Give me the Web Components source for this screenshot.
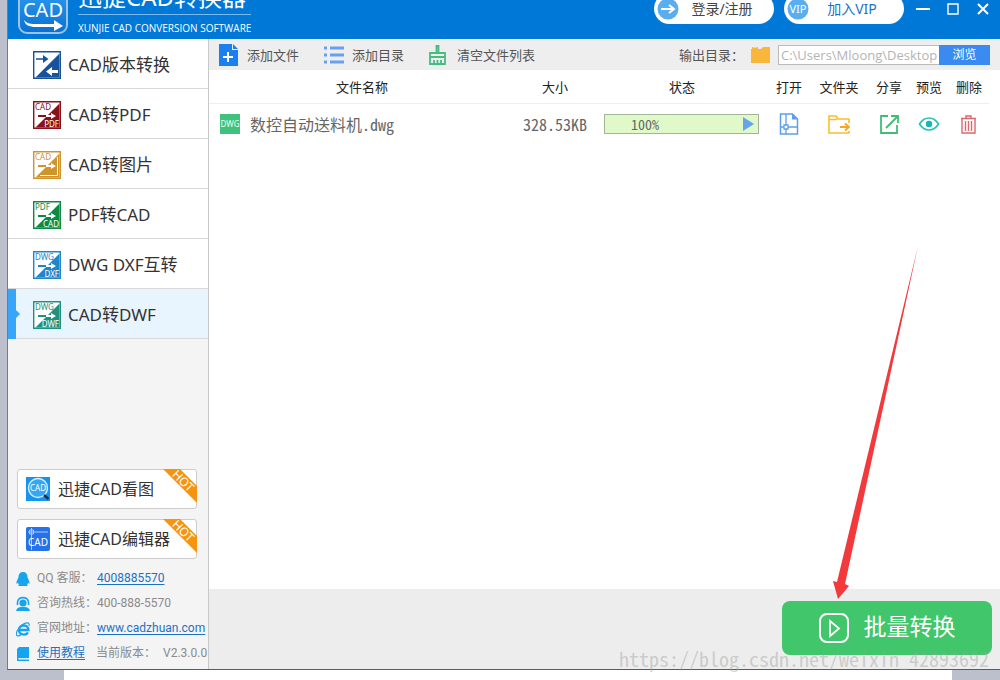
<!DOCTYPE html>
<html lang="zh-CN">
<head>
<meta charset="utf-8">
<title>迅捷CAD转换器</title>
<style>
html{height:100%}
body{margin:0;min-height:100%;display:flex;flex-direction:column;background:#bcc0cc;color:#333;font-family:"Noto Sans","Noto Sans CJK SC",sans-serif}
converter-app{flex:1}
.sheet{height:10px;margin:0 48px 0 64px;background:#fff}
</style>
</head>
<body>
<converter-app></converter-app>
<div class="sheet"></div>

<script>
const GLYPHS = {
  logo: ['0 0 50 50', `<defs><linearGradient id="g" x1="0" y1="0" x2="0" y2="1"><stop offset="0" stop-color="#2fa0f5"/><stop offset="1" stop-color="#0a70d0"/></linearGradient></defs><rect x="1" y="1" width="48" height="48" rx="8" fill="url(#g)" stroke="#9cc3e6" stroke-width="2"/><text x="25" y="33" font-size="20" text-anchor="middle" fill="#fff">CAD</text><path d="M6 36c3 4 7 4 13 4h17v-4l9 6-9 5v-4H18c-7 0-11-2-12-7z" fill="#fff"/>`],
  login: ['0 0 24 24', `<circle cx="12" cy="12" r="10.500" fill="#5aaef0"/><path d="M5 12h13M13 8l5 4-5 4" fill="none" stroke="#fff" stroke-width="2"/>`],
  vip: ['0 0 24 24', `<circle cx="12" cy="12" r="10.500" fill="#5aaef0"/><text x="12" y="16" font-size="11" text-anchor="middle" fill="#fff">VIP</text>`],
  min: ['0 0 14 14', `<path d="M0 7h14" stroke="#fff" stroke-width="2"/>`],
  max: ['0 0 14 14', `<path d="M2 2h10v10H2z" fill="none" stroke="#fff" stroke-width="1.400"/>`],
  close: ['0 0 14 14', `<path d="M2 2l10 10M12 2L2 12" stroke="#fff" stroke-width="2"/>`],
  addfile: ['0 0 20 22', `<path d="M0 0h13v6h6v16H0z" fill="#1b7ff0"/><path d="M14 0l5 5h-5z" fill="#1b7ff0"/><path d="M4 13h10M9 8v10" stroke="#fff" stroke-width="2"/>`],
  list: ['0 0 20 22', `<path d="M0 4h3M0 11h3M0 18h3M6 4h14M6 11h14M6 18h14" stroke="#66a0f0" stroke-width="3"/>`],
  broom: ['0 0 20 22', `<path d="M7.500 2h2v7h-2zM1 9h15v4H1zM1 13v7h15v-7M5 20v-4M8.500 20v-4M12 20v-4" fill="none" stroke="#45bd80" stroke-width="1.800"/>`],
  folder: ['0 0 20 18', `<path d="M0 3h1V1h6v2h3l2-2h7v16H0z" fill="#f8b73c"/><path d="M2 1.500h4" stroke="#fbd58a"/>`],
  dwg: ['0 0 20 20', `<path d="M0 0h20v20H0z" fill="#3fc280"/><text x="10" y="13" font-size="8" text-anchor="middle" fill="#e9fff3">DWG</text>`],
  open: ['0 0 22 24', `<path d="M2.500 2h12l5 5v15h-17z" fill="none" stroke="#5c9ff0" stroke-width="1.500"/><path d="M14 2v5.500h5.500z" fill="#5c9ff0"/><path d="M8 2v11M8 17v5M2 15h4M10 15h9M6 13h4v4H6z" fill="none" stroke="#5c9ff0" stroke-width="1.300"/>`],
  goto: ['0 0 22 24', `<path d="M21 11V7H10L8 4H1v17h20v-2M1 7.500h8" fill="none" stroke="#f9be2e" stroke-width="1.600"/><path d="M12 15h9M17 11.500l4 3.500-4 3.500" fill="none" stroke="#f6a51c" stroke-width="1.800"/>`],
  share: ['0 0 22 24', `<path d="M10 4H3v17h16v-8M8 16L19 5M13 4h7v7" fill="none" stroke="#3fbd75" stroke-width="1.800"/>`],
  eye: ['0 0 22 24', `<path d="M1.500 12c5-8 14-8 19 0-5 8-14 8-19 0z" fill="none" stroke="#28c3b8" stroke-width="1.700"/><circle cx="11" cy="12" r="3.200" fill="#19b6b4"/>`],
  trash: ['0 0 22 24', `<path d="M4 7v14h13V7M3 6.500h15M8 6V4h5v2M7.500 9v10M10.500 9v10M13.500 9v10" fill="none" stroke="#d86a70" stroke-width="1.400"/>`],
  play: ['0 0 30 30', `<rect x="1" y="1" width="28" height="28" rx="7" fill="none" stroke="#fff" stroke-width="2"/><path d="M11 8v15l9-7.500z" fill="none" stroke="#fff" stroke-width="1.800"/>`],
  viewer: ['0 0 24 24', `<path d="M0 0h24v24H0z" fill="#1795ee"/><circle cx="12" cy="11" r="9.500" fill="#36a7f3" stroke="#d5efff" stroke-width="1.400"/><text x="12" y="14" font-size="8" text-anchor="middle" fill="#fff">CAD</text><path d="M18 18l4.500 4" stroke="#17334d" stroke-width="2.500"/>`],
  editor: ['0 0 24 24', `<rect width="24" height="24" rx="2" fill="#2672e8"/><path d="M2 5h20M5.500 1v22M3.500 3h4v4h-4z" fill="none" stroke="#a9cdff"/><text x="12" y="19" font-size="10" text-anchor="middle" fill="#fff">CAD</text>`],
  qq: ['0 0 14 16', `<path d="M7 1c3 0 4.500 2 4.500 5 0 1.500 2.500 4 2 6.500-.5 1-1-.5-1.500-1 0 1-.5 1.500-1 2 1.500 1 .5 1.500-1 1.500H4c-1.500 0-2.500-.5-1-1.500-.5-.5-1-1-1-2-.5.500-1 2-1.500 1C0 10 2.500 7.500 2.500 6c0-3 1.500-5 4.500-5z" fill="#17a4ee"/>`],
  support: ['0 0 14 16', `<circle cx="7" cy="7" r="3.600" fill="#17a4ee"/><path d="M1.500 9V6.500C2 0 12 0 12.500 6.500V9" fill="none" stroke="#17a4ee" stroke-width="1.600"/><path d="M0 15c1-4 4-4 7-4s6 0 7 4z" fill="#17a4ee"/>`],
  web: ['0 0 14 16', `<path d="M12 11.500c-2 3-9 3-9-2.500 0-6 9.500-6 9.500 0H4" fill="none" stroke="#17a4ee" stroke-width="2.300"/><path d="M13 5c1-4-3-4-7-1-4 3-7 9-5 10.500 1 .7 3 0 4-1" fill="none" stroke="#17a4ee" stroke-width="1.200"/>`],
  book: ['0 0 14 16', `<path d="M3 1h10v11H2.500v1.500H13V15H1V3z" fill="#17a4ee"/><path d="M2.500 12.700H12" stroke="#bfe5fa"/>`]
};

/* Square two-tone badge used in the side menu: source format above, target format below. */
function badge(color, from, to, extra = '') {
  const arrows = from
    ? `<path d="M5 14h8v2H5z" fill="${color}"/><path d="M13 14h5v-2l5 3-5 3v-2h-5z" fill="#fff"/><text x="2" y="9" font-size="8" fill="${color}">${from}</text><text x="26" y="26" font-size="8" text-anchor="end" fill="#fff">${to}</text>`
    : `<path d="M3 7.200h7V4l5.500 4-5.500 4V8.800H3z" fill="${color}"/><path d="M25 19h-6v-3l-6 4.500 6 4.500v-3h6z" fill="#fff"/>`;
  return ['0 0 28 28', `<path d="M.7.700h26.600v26.600H.7z" fill="#fff" stroke="${color}" stroke-width="1.400"/><path d="M26.500 2.500v24h-24z" fill="${color}"/>${extra}${arrows}`];
}
GLYPHS.version = badge('#17529a');
GLYPHS.pdf = badge('#8c1017', 'CAD', 'PDF');
GLYPHS.image = badge('#d0942a', 'CAD', '', '<path d="M24.500 6v18.500H7" fill="none" stroke="#fff"/>');
GLYPHS.cad = badge('#0c8a42', 'PDF', 'CAD');
GLYPHS.dxf = badge('#2086cc', 'DWG', 'DXF');
GLYPHS.dwf = badge('#1f917e', 'DWG', 'DWF');

function define(name, html, setup) {
  const template = document.createElement('template');
  template.innerHTML = '<style>*{box-sizing:border-box}</style>' + html;
  customElements.define(name, class extends HTMLElement {
    connectedCallback() {
      if (this.shadowRoot) return;
      const root = this.attachShadow({ mode: 'open' });
      root.append(template.content.cloneNode(true));
      if (setup) setup(this, root);
    }
  });
}

define('ui-icon', `<style>:host{display:block;flex:none;font-family:"Noto Sans",sans-serif}svg{display:block;width:100%;height:100%}</style>`, (el, root) => {
  const [box, body] = GLYPHS[el.getAttribute('name')];
  const [, , w, h] = box.split(' ');
  el.style.width = w + 'px';
  el.style.height = h + 'px';
  const holder = document.createElement('template');
  holder.innerHTML = `<svg viewBox="${box}" aria-hidden="true">${body}</svg>`;
  root.append(holder.content.cloneNode(true));
});

define('pill-button', `<style>
:host{display:block}
button{display:flex;align-items:center;width:120px;height:31px;padding:0 10px 0 2px;border:0;border-radius:16px;background:#fff;color:inherit;font:14px/20px "Noto Sans","Noto Sans CJK SC",sans-serif}
span{flex:1;text-align:center}
</style><button type="button"><slot name="icon"></slot><span><slot></slot></span></button>`);

define('title-bar', `<style>
:host{display:flex;align-items:flex-end;height:39px;padding:0 10px;overflow:hidden;background:#0078d7;color:#fff}
.logo{margin-bottom:5px}
.brand{margin:0 auto 4px 10px}
h1{margin:0;padding-bottom:4px;border-bottom:1px solid #7db9ea;font-size:24px;line-height:26px;font-weight:400;white-space:nowrap}
p{margin:6px 0 0;font:10px/14px "Open Sans",sans-serif;white-space:nowrap}
.tools{display:flex;gap:10px;margin-bottom:15px}
.win{display:flex;gap:16px;margin:0 0 23px 12px}
.win button{border:0;padding:0;background:none}
</style>
<ui-icon class="logo" name="logo"></ui-icon>
<div class="brand"><h1>迅捷CAD转换器</h1><p>XUNJIE CAD CONVERSION SOFTWARE</p></div>
<div class="tools"><pill-button style="color:#444"><ui-icon slot="icon" name="login"></ui-icon>登录/注册</pill-button><pill-button style="color:#1b72c4"><ui-icon slot="icon" name="vip"></ui-icon>加入VIP</pill-button></div>
<div class="win"><button aria-label="最小化"><ui-icon name="min"></ui-icon></button><button aria-label="最大化"><ui-icon name="max"></ui-icon></button><button aria-label="关闭"><ui-icon name="close"></ui-icon></button></div>`);

define('nav-item', `<style>
:host{display:block}
a{position:relative;display:flex;align-items:center;gap:7px;height:50px;padding:2px 0 0 25px;border-bottom:1px solid #d8d8d8;background:#fff;color:#333;font-size:17px;line-height:24px;text-decoration:none;white-space:nowrap}
:host([current]) a{background:#e9f5fe}
:host([current]) a::before{content:"";position:absolute;left:0;top:0;width:12px;height:50px;background:#36a5fa;clip-path:polygon(0 0,8px 0,8px 21px,12px 25px,8px 29px,8px 100%,0 100%)}
</style><a href="#"><slot name="icon"></slot><span><slot></slot></span></a>`, (el, root) => {
  if (el.hasAttribute('current')) root.querySelector('a').setAttribute('aria-current', 'page');
});

define('promo-button', `<style>
:host{display:block}
button{position:relative;display:flex;align-items:center;gap:8px;width:100%;height:40px;padding:0 8px;border:1px solid #ccc;border-radius:3px;background:#fff;color:#333;font:16px/24px "Noto Sans","Noto Sans CJK SC",sans-serif;white-space:nowrap}
svg{position:absolute;top:-1px;right:-1px;width:34px;height:34px;overflow:visible}
</style><button type="button"><slot name="icon"></slot><span><slot></slot></span>
<svg viewBox="0 0 34 34"><path d="M0 0h17l17 17v17z" fill="#f7940f"/><text transform="translate(20 12) rotate(45)" x="0" y="4" font-size="12" text-anchor="middle" fill="#fff">HOT</text></svg></button>`);

define('contact-list', `<style>
:host{display:block;padding:7px 0 3px;font-family:Roboto,"Noto Sans CJK SC",sans-serif;font-size:12px;line-height:25px;color:#8b8b8b}
div{display:flex;align-items:center;gap:7px;height:25px;padding-left:8px;white-space:nowrap}
.label{width:53px}
a{color:#1b72c4;text-underline-offset:2px}
.ver{margin-left:4px}
</style>
<div><ui-icon name="qq"></ui-icon><span class="label">QQ 客服：</span><a href="#">4008885570</a></div>
<div><ui-icon name="support"></ui-icon><span class="label">咨询热线：</span><span>400-888-5570</span></div>
<div><ui-icon name="web"></ui-icon><span class="label">官网地址：</span><a href="#">www.cadzhuan.com</a></div>
<div><ui-icon name="book"></ui-icon><a href="#">使用教程</a><span class="ver">当前版本：</span><span>V2.3.0.0</span></div>`);

define('side-bar', `<style>
:host{display:flex;flex-direction:column;background:#f4f4f4;border-right:1px solid #c8c8c8}
.promos{display:grid;gap:10px;margin:auto 11px 0 9px}
</style>
<nav>
<nav-item><ui-icon slot="icon" name="version"></ui-icon>CAD版本转换</nav-item>
<nav-item><ui-icon slot="icon" name="pdf"></ui-icon>CAD转PDF</nav-item>
<nav-item><ui-icon slot="icon" name="image"></ui-icon>CAD转图片</nav-item>
<nav-item><ui-icon slot="icon" name="cad"></ui-icon>PDF转CAD</nav-item>
<nav-item><ui-icon slot="icon" name="dxf"></ui-icon>DWG DXF互转</nav-item>
<nav-item current><ui-icon slot="icon" name="dwf"></ui-icon>CAD转DWF</nav-item>
</nav>
<div class="promos">
<promo-button><ui-icon slot="icon" name="viewer"></ui-icon>迅捷CAD看图</promo-button>
<promo-button><ui-icon slot="icon" name="editor"></ui-icon>迅捷CAD编辑器</promo-button>
</div>
<contact-list></contact-list>`);

define('tool-bar', `<style>
:host{display:flex;align-items:center;height:31px;padding:0 10px;background:#eee;color:#555;font-size:13px;white-space:nowrap}
button{border:0;padding:0;background:none;color:inherit;font:13px/20px "Noto Sans","Noto Sans CJK SC",sans-serif}
.actions{display:flex;gap:25px;margin-right:auto}
.actions button{display:flex;align-items:center;gap:8px}
.out{display:flex;align-items:center;gap:7px}
.path{display:flex}
input{width:161px;height:20px;padding:0 2px;border:1px solid #bbb;border-right:0;background:#fff;color:#b4b4b4;font:13px/18px "Open Sans",sans-serif}
.path button{width:51px;height:20px;background:#3a8bf0;color:#fff;font-size:12px}
</style>
<div class="actions"><button><ui-icon name="addfile"></ui-icon>添加文件</button><button><ui-icon name="list"></ui-icon>添加目录</button><button><ui-icon name="broom"></ui-icon>清空文件列表</button></div>
<div class="out"><label for="dir">输出目录：</label><ui-icon name="folder"></ui-icon><div class="path"><input id="dir" value="C:\\Users\\Mloong\\Desktop"><button>浏览</button></div></div>`);

define('progress-cell', `<style>
:host{display:flex;align-items:center;justify-content:space-between;height:20px;margin:0 10px 0 9px;padding:0 4px 0 26px;border:1px solid #a3b598;background:#dff9c8;color:#666;font-size:14px}
i{width:11px;height:14px;background:#66a3ec;clip-path:polygon(0 0,100% 50%,0 100%)}
</style><span><slot></slot></span><i></i>`);

define('file-table', `<style>
:host{display:block;padding-right:11px;background:#fff}
table{width:100%;table-layout:fixed;border-collapse:separate;border-spacing:0}
th{height:34px;padding:0;border-bottom:1px solid #eee;color:#222;font-size:13px;line-height:20px;font-weight:400}
td{height:40px;padding:0;text-align:center;color:#666;font-family:"Noto Sans Mono CJK SC","Noto Sans CJK SC",monospace;font-size:16px;line-height:24px}
.size{width:80px}.status{width:174px}.act{width:40px}.wide{width:60px}
.name{display:flex;align-items:center;gap:10px;padding-left:11px}
button{display:block;margin:0 auto;border:0;padding:0;background:none}
</style>
<table>
<thead><tr><th>文件名称</th><th class="size">大小</th><th class="status">状态</th><th class="act">打开</th><th class="wide">文件夹</th><th class="act">分享</th><th class="act">预览</th><th class="act">删除</th></tr></thead>
<tbody><tr><td><div class="name"><ui-icon name="dwg"></ui-icon><span>数控自动送料机.dwg</span></div></td><td>328.53KB</td><td><progress-cell role="progressbar" aria-valuenow="100">100%</progress-cell></td>
<td><button aria-label="打开"><ui-icon name="open"></ui-icon></button></td><td><button aria-label="文件夹"><ui-icon name="goto"></ui-icon></button></td><td><button aria-label="分享"><ui-icon name="share"></ui-icon></button></td><td><button aria-label="预览"><ui-icon name="eye"></ui-icon></button></td><td><button aria-label="删除"><ui-icon name="trash"></ui-icon></button></td></tr></tbody>
</table>`);

define('action-bar', `<style>
:host{display:flex;justify-content:flex-end;padding:12px 8px 14px;background:#ededed}
button{display:flex;align-items:center;justify-content:center;gap:15px;width:210px;height:54px;border:0;border-radius:8px;background:#42c66c;color:#fff;font:23px/32px "Noto Sans","Noto Sans CJK SC",sans-serif}
span{padding-bottom:4px}
</style><button type="button"><ui-icon name="play"></ui-icon><span><slot></slot></span></button>`);

define('converter-app', `<style>
:host{position:relative;display:flex;flex-direction:column;margin-left:7px;border-left:1px solid #777b85;border-bottom:1px solid #5c5c60;background:#fff}
.body{flex:1;display:grid;grid-template-columns:201px 1fr}
main{display:flex;flex-direction:column;min-width:0}
file-table{flex:1}
.pointer{position:absolute;right:80px;bottom:69px;width:90px;height:354px;pointer-events:none}
.mark{position:absolute;right:11px;bottom:-2px;color:rgba(160,160,160,.45);font:20px/24px "Noto Sans Mono CJK SC","Liberation Mono",monospace;font-weight:300;white-space:nowrap;pointer-events:none}
</style>
<title-bar></title-bar>
<div class="body"><side-bar></side-bar><main><tool-bar></tool-bar><file-table></file-table><action-bar>批量转换</action-bar></main></div>
<svg class="pointer" viewBox="0 0 90 354"><path d="M88 0L15 338l4 2-11 13-5-18 4 1z" fill="#f23a3c"/></svg>
<div class="mark">https://blog.csdn.net/weixin_42893692</div>`);
</script>
</body>
</html>
